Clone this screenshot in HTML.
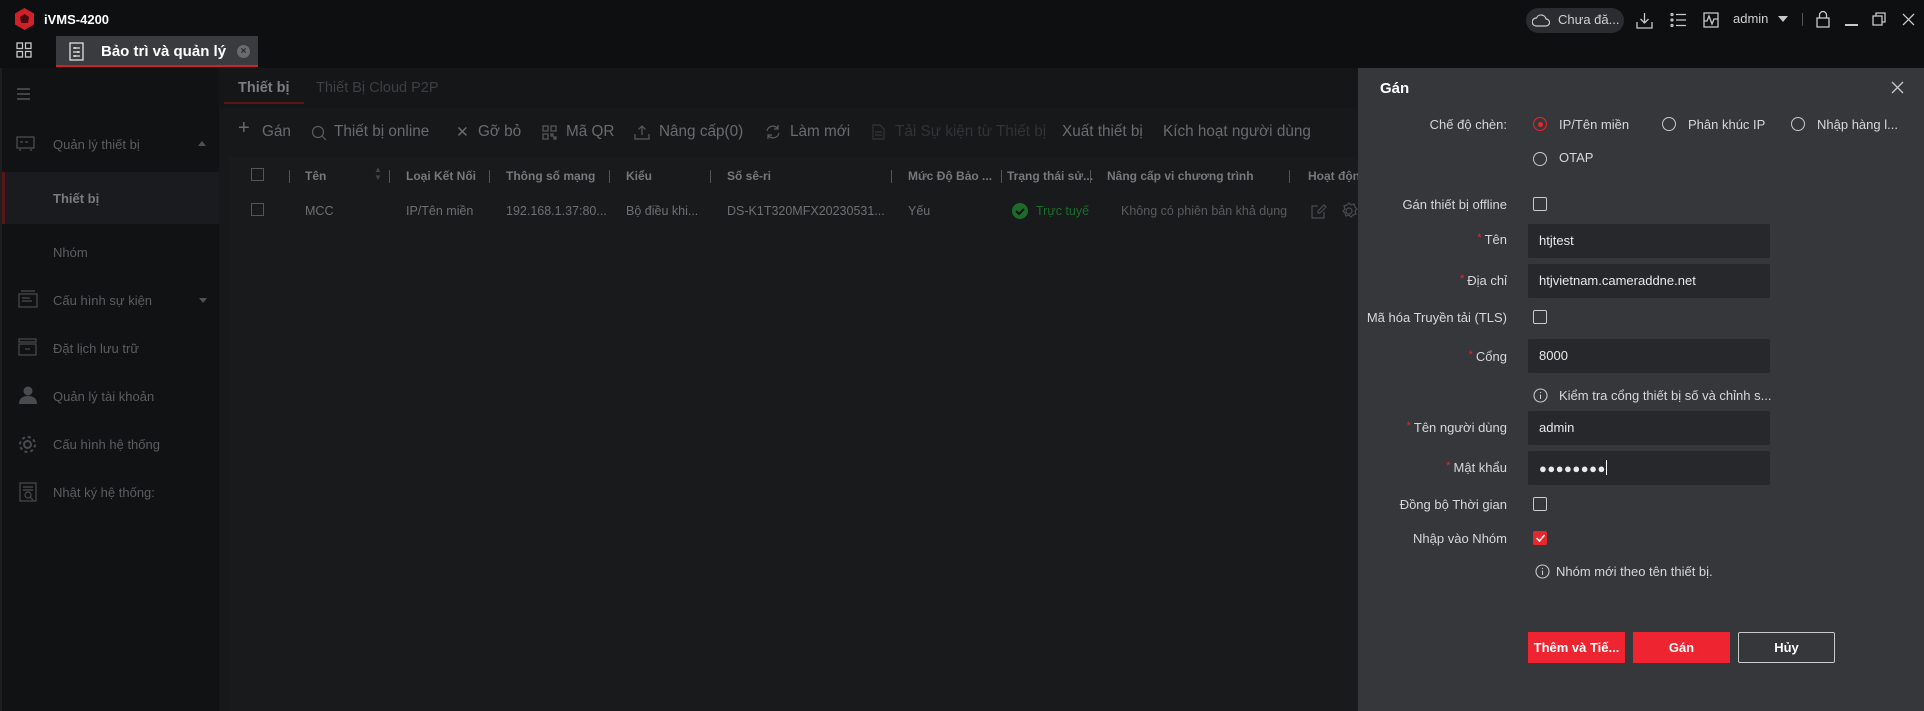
<!DOCTYPE html>
<html><head><meta charset="utf-8"><style>
*{margin:0;padding:0;box-sizing:border-box}
body{width:1924px;height:711px;overflow:hidden;background:#0e0f11;font-family:"Liberation Sans","DejaVu Sans",sans-serif;position:relative;color:#8a8b8e}
.a{position:absolute;white-space:nowrap}
.top{left:0;top:0;width:1924px;height:68px;background:#0e0f10}
.side{left:0;top:68px;width:219px;height:643px;background:#111214;border-left:2px solid #1d1e20}
.main{left:219px;top:68px;width:1143px;height:643px;background:#151618}
.tb{left:219px;top:108px;width:1143px;height:603px;background:#17181a}
.tbl{left:229px;top:157px;width:1133px;height:554px;background:#191a1c}
.si{font-size:13px;color:#5c5d60}
.tool{font-size:15.3px;color:#6a6b6e;top:123px}
.th{font-size:12px;font-weight:bold;color:#77787b;top:169px}
.td{font-size:12.5px;color:#6e6f72;top:204px}
.sep{width:1px;height:13px;background:#55565a;top:170px}
.dlg{left:1358px;top:68px;width:566px;height:643px;background:#35373b}
.lb{font-size:13px;color:#d6d7d9;text-align:right;width:200px;left:1307px}
.lb i{color:#e8262d;font-style:normal;font-size:11px;margin-right:3px;vertical-align:3px}
.in{left:1528px;width:242px;height:34px;background:#26282b;border-radius:2px;color:#e8e8e8;font-size:13px;padding:9px 11px}
.cb{left:1533px;width:14px;height:14px;border:1.5px solid #c8c9cb;border-radius:2px}
.rd{width:14px;height:14px;border:1.5px solid #c8c9cb;border-radius:50%}
.rt{font-size:13px;color:#d6d7d9}
.btn{top:632px;height:31px;font-size:13px;font-weight:bold;color:#fff;text-align:center;line-height:31px}
</style></head><body>
<div class="a top"></div>
<svg class="a" style="left:15px;top:8px" width="19" height="22" viewBox="0 0 19 22"><polygon points="9.5,0 19,5.5 19,16.5 9.5,22 0,16.5 0,5.5" fill="#d0202a"/><polygon points="9.5,6 14,9 13,15 6,15 5,9" fill="#4a0a0d"/></svg>
<div class="a" style="left:44px;top:12px;font-size:13px;font-weight:bold;color:#fff">iVMS-4200</div>
<svg class="a" style="left:16px;top:42px" width="16" height="16" viewBox="0 0 16 16" fill="none" stroke="#c8c8c8" stroke-width="1.3"><rect x="1" y="1" width="5.5" height="5.5"/><rect x="9.5" y="1" width="5.5" height="5.5"/><rect x="1" y="9.5" width="5.5" height="5.5"/><rect x="9.5" y="9.5" width="5.5" height="5.5"/></svg>
<div class="a" style="left:56px;top:36px;width:202px;height:31px;background:#3a3b3e;border-bottom:2px solid #d0202a"></div>
<svg class="a" style="left:69px;top:42px" width="15" height="19" viewBox="0 0 15 19" fill="none" stroke="#e0e0e0" stroke-width="1.3"><rect x="1" y="1" width="13" height="17"/><path d="M4 6h7M4 10h7M4 14h7M6 5v2M9 9v2M6 13v2"/></svg>
<div class="a" style="left:101px;top:43px;font-size:15px;font-weight:bold;color:#fff">Bảo trì và quản lý</div>
<div class="a" style="left:237px;top:45px;width:13px;height:13px;border-radius:50%;background:#6a6b6e;color:#2a2a2c;font-size:10px;line-height:13px;text-align:center;font-weight:bold">×</div>
<div class="a" style="left:1526px;top:8px;width:98px;height:25px;border-radius:13px;background:#2b2c2f"></div>
<svg class="a" style="left:1532px;top:13px" width="18" height="14" viewBox="0 0 18 14" fill="none" stroke="#c8c8c8" stroke-width="1.2"><path d="M4 13h10a3.5 3.5 0 0 0 0-7 5 5 0 0 0-9.5-1A4 4 0 0 0 4 13z"/></svg>
<div class="a" style="left:1558px;top:12px;font-size:13px;color:#d0d0d0">Chưa đă...</div>
<svg class="a" style="left:1636px;top:12px" width="17" height="17" viewBox="0 0 17 17" fill="none" stroke="#c8c8c8" stroke-width="1.3"><path d="M8.5 1v10M4.5 7l4 4 4-4M1 10v6h15v-6"/></svg>
<svg class="a" style="left:1670px;top:12px" width="16" height="16" viewBox="0 0 16 16" fill="none" stroke="#c8c8c8" stroke-width="1.3"><circle cx="2" cy="2.5" r="1"/><circle cx="2" cy="8" r="1"/><circle cx="2" cy="13.5" r="1"/><path d="M6 2.5h10M6 8h10M6 13.5h10"/></svg>
<svg class="a" style="left:1703px;top:12px" width="16" height="16" viewBox="0 0 16 16" fill="none" stroke="#c8c8c8" stroke-width="1.3"><rect x="1" y="1" width="14" height="14"/><path d="M1 9h3l2-5 3 8 2-5h4"/></svg>
<div class="a" style="left:1733px;top:11px;font-size:13px;color:#d0d0d0">admin</div>
<div class="a" style="left:1778px;top:16px;border-left:5px solid transparent;border-right:5px solid transparent;border-top:6px solid #c8c8c8"></div>
<div class="a" style="left:1802px;top:13px;width:1px;height:13px;background:#555"></div>
<svg class="a" style="left:1816px;top:10px" width="14" height="18" viewBox="0 0 14 18" fill="none" stroke="#c8c8c8" stroke-width="1.3"><rect x="1" y="8" width="12" height="9"/><path d="M3.5 8V5a3.5 3.5 0 0 1 7 0v3"/></svg>
<div class="a" style="left:1845px;top:24px;width:13px;height:1.5px;background:#c8c8c8"></div>
<svg class="a" style="left:1872px;top:12px" width="14" height="14" viewBox="0 0 14 14" fill="none" stroke="#c8c8c8" stroke-width="1.3"><rect x="1" y="4" width="9" height="9"/><path d="M4 4V1h9v9h-3"/></svg>
<svg class="a" style="left:1902px;top:13px" width="13" height="13" viewBox="0 0 13 13" stroke="#c8c8c8" stroke-width="1.3"><path d="M1 1l11 11M12 1L1 12"/></svg>
<div class="a side"></div>
<div class="a" style="left:17px;top:88px;width:13px;height:1.5px;background:#444;box-shadow:0 5px 0 #444,0 10px 0 #444"></div>
<div class="a" style="left:2px;top:172px;width:217px;height:52px;background:#1a1b1e;border-left:3px solid #5a1518"></div>
<svg class="a" style="left:16px;top:136px" width="19" height="15" viewBox="0 0 19 15" fill="none" stroke="#505154" stroke-width="1.2"><rect x="1" y="1" width="17" height="11"/><path d="M4 6h3M9 6h3M3 14h2M14 14h2"/></svg>
<div class="a si" style="left:53px;top:137px">Quản lý thiết bị</div>
<div class="a" style="left:198px;top:141px;border-left:4px solid transparent;border-right:4px solid transparent;border-bottom:5px solid #505154"></div>
<div class="a" style="left:53px;top:191px;font-size:13px;color:#7a7b7e;font-weight:bold">Thiết bị</div>
<div class="a si" style="left:53px;top:245px">Nhóm</div>
<svg class="a" style="left:18px;top:290px" width="20" height="18" viewBox="0 0 20 18" fill="none" stroke="#4a4b4e" stroke-width="1.2"><rect x="1" y="4" width="18" height="13"/><path d="M3 1h14M4 8h8M4 11h10"/></svg>
<div class="a si" style="left:53px;top:293px">Cấu hình sự kiện</div>
<div class="a" style="left:199px;top:298px;border-left:4px solid transparent;border-right:4px solid transparent;border-top:5px solid #505154"></div>
<svg class="a" style="left:18px;top:338px" width="19" height="18" viewBox="0 0 19 18" fill="none" stroke="#4a4b4e" stroke-width="1.2"><rect x="1" y="1" width="17" height="3"/><rect x="1" y="6" width="17" height="11"/><path d="M7 11h5"/></svg>
<div class="a si" style="left:53px;top:341px">Đặt lịch lưu trữ</div>
<svg class="a" style="left:18px;top:386px" width="20" height="18" viewBox="0 0 20 18" fill="#4a4b4e"><circle cx="10" cy="5" r="4.5"/><path d="M1 18c0-6 4-8 9-8s9 2 9 8z"/></svg>
<div class="a si" style="left:53px;top:389px">Quản lý tài khoản</div>
<svg class="a" style="left:17px;top:434px" width="21" height="21" viewBox="0 0 21 21" fill="none" stroke="#4a4b4e" stroke-width="2"><circle cx="10.5" cy="10.5" r="3.5"/><circle cx="10.5" cy="10.5" r="7.5" stroke-dasharray="3 2.9"/></svg>
<div class="a si" style="left:53px;top:437px">Cấu hình hệ thống</div>
<svg class="a" style="left:19px;top:482px" width="18" height="20" viewBox="0 0 18 20" fill="none" stroke="#4a4b4e" stroke-width="1.2"><rect x="1" y="1" width="16" height="18"/><path d="M4 5h10M4 8h10"/><circle cx="9" cy="13" r="3"/><path d="M11 15l3 3"/></svg>
<div class="a si" style="left:53px;top:485px">Nhật ký hệ thống:</div>
<div class="a main"></div>
<div class="a tb"></div>
<div class="a tbl"></div>
<div class="a" style="left:238px;top:80px;font-size:14.5px;font-weight:bold;color:#7c7d80">Thiết bị</div>
<div class="a" style="left:224px;top:102px;width:80px;height:2px;background:#5a1518"></div>
<div class="a" style="left:316px;top:80px;font-size:14.5px;color:#3e3f42">Thiết Bị Cloud P2P</div>
<div class="a tool" style="left:238px;font-size:20px;top:117px">+</div>
<div class="a tool" style="left:262px">Gán</div>
<svg class="a" style="left:311px;top:125px" width="16" height="16" viewBox="0 0 16 16" fill="none" stroke="#5a5b5e" stroke-width="1.2"><circle cx="7" cy="7" r="5.5"/><path d="M11 11l4 4"/></svg>
<div class="a tool" style="left:334px">Thiết bị online</div>
<div class="a tool" style="left:456px">✕</div>
<div class="a tool" style="left:478px">Gỡ bỏ</div>
<svg class="a" style="left:542px;top:125px" width="15" height="15" viewBox="0 0 15 15" fill="none" stroke="#5a5b5e" stroke-width="1.2"><rect x="1" y="1" width="5" height="5"/><rect x="9" y="1" width="5" height="5"/><rect x="1" y="9" width="5" height="5"/><path d="M9 9h2v2h-2zM12 12h2v2h-2z"/></svg>
<div class="a tool" style="left:566px">Mã QR</div>
<svg class="a" style="left:634px;top:124px" width="16" height="16" viewBox="0 0 16 16" fill="none" stroke="#5a5b5e" stroke-width="1.2"><path d="M8 2v9M4.5 5.5L8 2l3.5 3.5M1 10v5h14v-5"/></svg>
<div class="a tool" style="left:659px">Nâng cấp(0)</div>
<svg class="a" style="left:765px;top:124px" width="16" height="16" viewBox="0 0 16 16" fill="none" stroke="#5a5b5e" stroke-width="1.2"><path d="M2 7a6 6 0 0 1 11-2M14 9a6 6 0 0 1-11 2M13 1v4h-4M3 15v-4h4"/></svg>
<div class="a tool" style="left:790px">Làm mới</div>
<svg class="a" style="left:872px;top:124px" width="13" height="16" viewBox="0 0 13 16" fill="none" stroke="#333437" stroke-width="1.2"><path d="M1 1h7l4 4v10H1zM3 8h7M3 11h7"/></svg>
<div class="a tool" style="left:895px;color:#323336">Tải Sự kiện từ Thiết bị</div>
<div class="a tool" style="left:1062px">Xuất thiết bị</div>
<div class="a tool" style="left:1163px">Kích hoạt người dùng</div>
<div class="a" style="left:251px;top:168px;width:13px;height:13px;border:1.2px solid #55565a"></div>
<div class="a sep" style="left:289px"></div>
<div class="a th" style="left:305px">Tên</div>
<div class="a" style="left:374px;top:166px;font-size:8px;color:#444;line-height:8px">▲<br>▼</div>
<div class="a sep" style="left:389px"></div>
<div class="a th" style="left:406px">Loại Kết Nối</div>
<div class="a sep" style="left:489px"></div>
<div class="a th" style="left:506px">Thông số mạng</div>
<div class="a sep" style="left:609px"></div>
<div class="a th" style="left:626px">Kiểu</div>
<div class="a sep" style="left:710px"></div>
<div class="a th" style="left:727px">Số sê-ri</div>
<div class="a sep" style="left:891px"></div>
<div class="a th" style="left:908px">Mức Độ Bảo ...</div>
<div class="a sep" style="left:1001px"></div>
<div class="a th" style="left:1007px">Trạng thái sử...</div>
<div class="a sep" style="left:1090px"></div>
<div class="a th" style="left:1107px">Nâng cấp vi chương trình</div>
<div class="a sep" style="left:1289px"></div>
<div class="a th" style="left:1308px">Hoạt động</div>
<div class="a" style="left:251px;top:203px;width:13px;height:13px;border:1.2px solid #55565a"></div>
<div class="a td" style="left:305px">MCC</div>
<div class="a td" style="left:406px">IP/Tên miền</div>
<div class="a td" style="left:506px">192.168.1.37:80...</div>
<div class="a td" style="left:626px">Bộ điều khi...</div>
<div class="a td" style="left:727px">DS-K1T320MFX20230531...</div>
<div class="a td" style="left:908px">Yếu</div>
<svg class="a" style="left:1012px;top:203px" width="16" height="16" viewBox="0 0 16 16"><circle cx="8" cy="8" r="8" fill="#1e6a2a"/><path d="M4 8l3 3 5-5" stroke="#111" stroke-width="2" fill="none"/></svg>
<div class="a td" style="left:1036px;color:#1f6a2c">Trực tuyế</div>
<div class="a td" style="left:1121px;color:#5a5b5e">Không có phiên bản khả dụng</div>
<svg class="a" style="left:1311px;top:203px" width="16" height="16" viewBox="0 0 16 16" fill="none" stroke="#4a4b4e" stroke-width="1.2"><path d="M13 9v6H1V3h6M9 10l6-6-2-2-6 6v2z"/></svg>
<svg class="a" style="left:1340px;top:202px" width="18" height="18" viewBox="0 0 18 18" fill="none" stroke="#4a4b4e" stroke-width="1.2"><circle cx="9" cy="9" r="3"/><path d="M9 1l2 2 3-1 1 3 2 2-2 2 1 3-3 1-2 2-2-2-3 1-1-3-2-2 2-2-1-3 3-1z"/></svg>
<div class="a dlg"></div>
<div class="a" style="left:1380px;top:80px;font-size:15px;font-weight:bold;color:#fff">Gán</div>
<svg class="a" style="left:1891px;top:81px" width="13" height="13" viewBox="0 0 13 13" stroke="#c8c8c8" stroke-width="1.3"><path d="M1 1l11 11M12 1L1 12"/></svg>
<div class="a lb" style="top:117px">Chế độ chèn:</div>
<div class="a rd" style="left:1533px;top:117px;border-color:#e8262d"></div><div class="a" style="left:1537.5px;top:121.5px;width:5px;height:5px;border-radius:50%;background:#e8262d"></div>
<div class="a rt" style="left:1559px;top:117px">IP/Tên miền</div>
<div class="a rd" style="left:1662px;top:117px"></div><div class="a rt" style="left:1688px;top:117px">Phân khúc IP</div>
<div class="a rd" style="left:1791px;top:117px"></div><div class="a rt" style="left:1817px;top:117px">Nhập hàng l...</div>
<div class="a rd" style="left:1533px;top:152px"></div><div class="a rt" style="left:1559px;top:150px">OTAP</div>
<div class="a lb" style="top:197px">Gán thiết bị offline</div><div class="a cb" style="top:197px"></div>
<div class="a lb" style="top:232px"><i>*</i>Tên</div><div class="a in" style="top:224px">htjtest</div>
<div class="a lb" style="top:273px"><i>*</i>Địa chỉ</div><div class="a in" style="top:264px">htjvietnam.cameraddne.net</div>
<div class="a lb" style="top:310px">Mã hóa Truyền tải (TLS)</div><div class="a cb" style="top:310px"></div>
<div class="a lb" style="top:349px"><i>*</i>Cổng</div><div class="a in" style="top:339px">8000</div>
<svg class="a" style="left:1533px;top:388px" width="15" height="15" viewBox="0 0 15 15" fill="none" stroke="#c8c8c8" stroke-width="1.1"><circle cx="7.5" cy="7.5" r="6.5"/><path d="M7.5 6.5v4.5M7.5 4v1"/></svg>
<div class="a rt" style="left:1559px;top:388px">Kiểm tra cổng thiết bị số và chỉnh s...</div>
<div class="a lb" style="top:420px"><i>*</i>Tên người dùng</div><div class="a in" style="top:411px">admin</div>
<div class="a lb" style="top:460px"><i>*</i>Mật khẩu</div><div class="a in" style="top:451px;letter-spacing:0.5px">●●●●●●●●<span style="display:inline-block;width:1px;height:15px;background:#fff;vertical-align:-2px"></span></div>
<div class="a lb" style="top:497px">Đồng bộ Thời gian</div><div class="a cb" style="top:497px"></div>
<div class="a lb" style="top:531px">Nhập vào Nhóm</div>
<div class="a cb" style="top:531px;background:#e8262d;border-color:#e8262d"></div>
<svg class="a" style="left:1535px;top:533px" width="11" height="10" viewBox="0 0 11 10" fill="none" stroke="#fff" stroke-width="1.5"><path d="M1.5 5l3 3 5-6"/></svg>
<svg class="a" style="left:1535px;top:564px" width="15" height="15" viewBox="0 0 15 15" fill="none" stroke="#c8c8c8" stroke-width="1.1"><circle cx="7.5" cy="7.5" r="6.5"/><path d="M7.5 6.5v4.5M7.5 4v1"/></svg>
<div class="a rt" style="left:1556px;top:564px">Nhóm mới theo tên thiết bị.</div>
<div class="a btn" style="left:1528px;width:97px;background:#ee2530">Thêm và Tiế...</div>
<div class="a btn" style="left:1633px;width:97px;background:#ee2530">Gán</div>
<div class="a btn" style="left:1738px;width:97px;border:1.2px solid #c8c9cb;line-height:29px;border-radius:2px">Hủy</div>
</body></html>
